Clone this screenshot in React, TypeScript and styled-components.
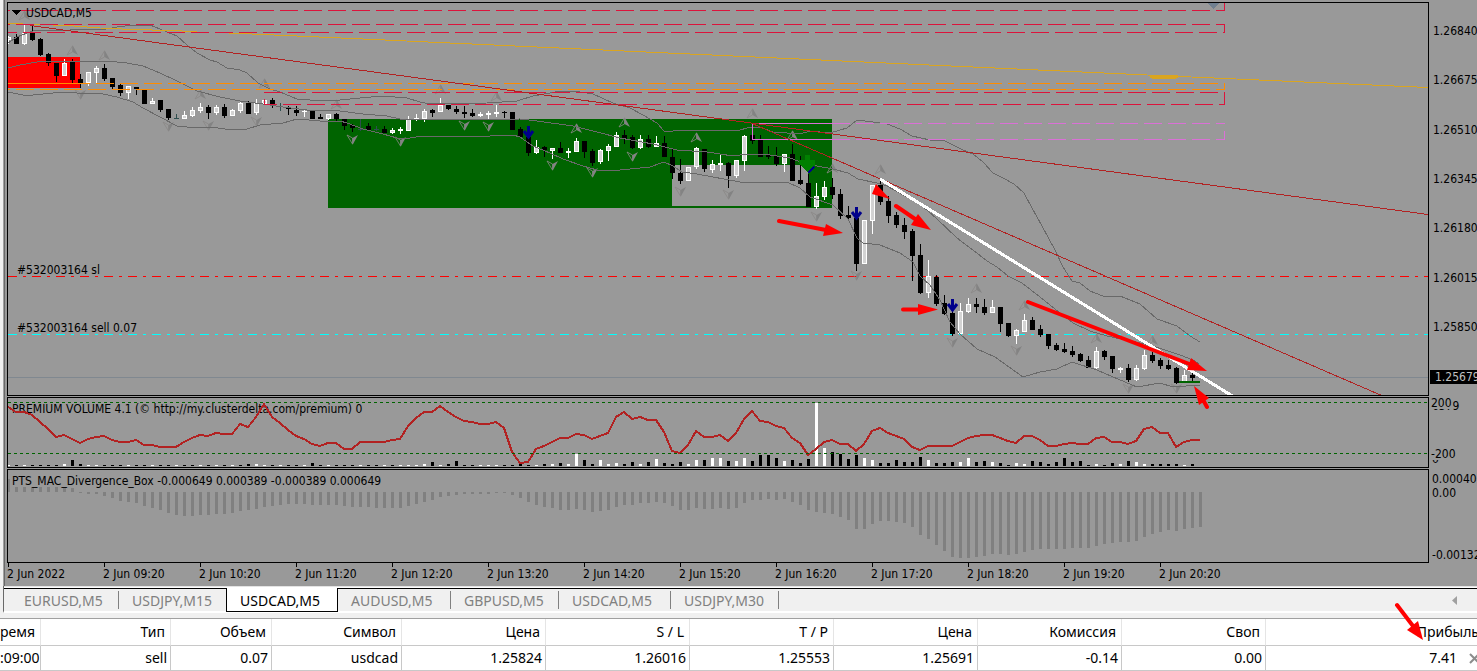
import React from 'react';
import styled, { createGlobalStyle, css } from 'styled-components';

const GlobalStyle = createGlobalStyle`
  html, body { margin: 0; padding: 0; background: #fff; }
  body { overflow: hidden; }
  * { box-sizing: border-box; }
`;

const chartFont = `"DejaVu Sans Condensed", "Noto Sans", sans-serif`;
const uiFont = `"Noto Sans", "Open Sans", sans-serif`;

const Terminal = styled.main`
  position: relative;
  overflow: hidden;
  background: #f0f0f0;
  font-family: ${uiFont};
`;

const ChartWindow = styled.section`
  display: flex;
  flex-direction: column;
  gap: 1px;
  margin-left: 3px;
  padding: 2px 0 0 3px;
  border-left: 1px solid #a0a0a0;
  box-shadow: inset 1px 0 0 #696969;
  background: #999;
  font: 12px/14px ${chartFont};
  color: #000;
`;

const Panel = styled.div<{ $height: number }>`
  display: grid;
  grid-template-columns: minmax(0, 1fr) 48px;
  height: ${(p) => p.$height}px;
`;

const Plot = styled.svg`
  display: block;
  width: 100%;
  height: 100%;
  border: 1px solid #000;
  shape-rendering: crispEdges;
`;

const Axis = styled.div`
  position: relative;
  overflow: hidden;
  white-space: nowrap;
`;

const PriceScale = styled.div`
  display: flex;
  flex-direction: column;
  justify-content: space-between;
  height: 310px;
  margin-top: 22px;
`;

const Tick = styled.div`
  display: flex;
  align-items: center;
  height: 14px;
  &::before {
    content: '';
    width: 2px;
    height: 1px;
    margin-right: 4px;
    background: #000;
  }
`;

const LastPrice = styled.div`
  height: 14px;
  margin: 36px 0 0 1px;
  padding-left: 5px;
  background: #000;
  color: #c0c0c0;
`;

const Level = styled.span<{ $top: number; $front?: boolean }>`
  position: absolute;
  left: 2px;
  top: ${(p) => p.$top}px;
  padding-left: 1px;
  ${(p) => p.$front && css`
    left: 1px;
    background: #999;
    height: 12px;
    line-height: 12px;
  `}
`;

const TimeAxis = styled.ol`
  display: flex;
  height: 23px;
  margin: -1px 0 0;
  padding: 0;
  list-style: none;
  overflow: hidden;
`;

const TimeMark = styled.li`
  flex: 0 0 96px;
  padding-top: 4px;
  white-space: nowrap;
  background: linear-gradient(#000, #000) 1px 0 / 1px 4px no-repeat;
`;

const TabBar = styled.nav`
  display: flex;
  align-items: stretch;
  height: 27px;
  margin-left: 3px;
  border-left: 1px solid #696969;
  border-bottom: 2px solid #fff;
  background: linear-gradient(#e3e3e3 0 1px, #fff 1px 2px, #000 2px 3px, #f0f0f0 3px);
`;

const Tab = styled.button<{ $active?: boolean; $width: number }>`
  flex: 0 0 ${(p) => p.$width}px;
  height: 24px;
  margin-top: 2px;
  padding: 2px 0 0 13px;
  border: 0;
  background: ${(p) => (p.$active ? '#fff' : 'linear-gradient(#808080, #808080) right 3px / 1px 18px no-repeat')};
  ${(p) => p.$active && css`
    border: 1px solid #000;
    border-top: 0;
    margin-left: -1px;
  `}
  color: ${(p) => (p.$active ? '#000' : '#808080')};
  font: 14px/20px ${uiFont};
  text-align: left;
  white-space: nowrap;
  &:first-child { padding-left: 20px; }
`;

const ScrollButton = styled.button`
  margin: 3px 18px 0 auto;
  padding: 0 2px;
  border: 0;
  background: none;
  line-height: 0;
`;

const TableFrame = styled.div`
  margin-top: 5px;
  border-top: 1px solid #a0a0a0;
  background: #fff;
  overflow: hidden;
`;

const Orders = styled.table`
  width: calc(100% + 8px);
  border-collapse: separate;
  border-spacing: 0;
  table-layout: fixed;
  font: 14px/20px ${uiFont};
  color: #000;
`;

const HeadCell = styled.th`
  height: 27px;
  padding: 0 5px 0 0;
  border-right: 1px solid #e5e5e5;
  border-bottom: 1px solid #c8c8c8;
  font-weight: 400;
  text-align: right;
  white-space: nowrap;
  &:last-child { border-right: 0; padding-right: 6px; }
`;

const Cell = styled.td`
  height: 25px;
  padding: 0 3px 0 0;
  border-right: 1px solid #c8c8c8;
  border-bottom: 1px solid #c8c8c8;
  text-align: right;
  white-space: nowrap;
`;

const ProfitCell = styled(Cell)`
  border-right: 0;
  padding-right: 5px;
`;

const CloseButton = styled.button`
  margin: 0 0 0 12px;
  padding: 0;
  border: 0;
  background: none;
  line-height: 0;
  vertical-align: -1px;
`;

const Markup = styled.svg`
  position: absolute;
  left: 0;
  top: 0;
  width: 100%;
  height: 100%;
  pointer-events: none;
`;

/* One bar is eight pixels wide; the first one is centred on x = 8. */
const barX = (i: number) => 8 + i * 8;

/* kind (1 rising, 0 falling, 2 unchanged), high, body top, body bottom, low */
const candles: number[][] = [
  [1, 36, 37, 40, 44], [0, 34, 37, 44, 44], [1, 24, 33, 44, 45], [0, 25, 33, 40, 41], [0, 38, 39, 55, 56],
  [0, 53, 54, 63, 66], [0, 63, 63, 76, 82], [1, 59, 63, 76, 76], [0, 59, 61, 80, 83], [0, 74, 79, 83, 88],
  [1, 72, 72, 83, 86], [1, 66, 68, 73, 83], [0, 64, 68, 79, 81], [0, 78, 78, 87, 89], [0, 83, 85, 93, 96],
  [1, 86, 86, 93, 99], [0, 87, 87, 89, 95], [0, 90, 90, 104, 104], [1, 98, 101, 104, 104], [0, 100, 100, 110, 112],
  [0, 109, 109, 118, 120], [2, 114, 118, 119, 119], [1, 111, 115, 119, 119], [1, 107, 110, 116, 117], [1, 103, 107, 111, 113],
  [0, 105, 107, 113, 119], [1, 105, 107, 113, 115], [0, 104, 107, 116, 118], [1, 109, 110, 116, 116], [1, 101, 103, 111, 113],
  [0, 101, 103, 114, 114], [1, 99, 103, 113, 115], [1, 99, 100, 104, 104], [0, 98, 100, 106, 108], [2, 103, 106, 107, 111],
  [0, 106, 107, 109, 115], [0, 106, 110, 113, 116], [1, 110, 111, 112, 117], [0, 111, 111, 119, 119], [0, 114, 117, 119, 119],
  [1, 114, 114, 119, 120], [0, 113, 114, 119, 121], [0, 119, 119, 126, 130], [0, 124, 125, 128, 132], [2, 119, 129, 130, 131],
  [0, 123, 126, 130, 130], [2, 126, 129, 130, 131], [0, 126, 129, 133, 133], [1, 128, 130, 133, 134], [1, 127, 129, 131, 134],
  [1, 116, 119, 131, 131], [1, 114, 118, 119, 121], [1, 109, 111, 119, 122], [0, 109, 110, 113, 117], [1, 98, 105, 112, 112],
  [0, 105, 105, 109, 110], [0, 106, 109, 112, 114], [0, 106, 112, 114, 118], [0, 109, 113, 116, 117], [1, 112, 114, 116, 117],
  [1, 111, 113, 115, 119], [1, 105, 112, 114, 117], [0, 111, 112, 113, 118], [0, 112, 112, 130, 130], [0, 127, 129, 137, 137],
  [0, 136, 137, 153, 156], [1, 140, 147, 153, 154], [0, 146, 147, 150, 157], [1, 148, 148, 151, 159], [0, 142, 148, 153, 153],
  [1, 148, 151, 153, 158], [1, 138, 141, 152, 152], [0, 141, 141, 152, 158], [0, 149, 151, 163, 166], [1, 149, 150, 162, 164],
  [1, 144, 146, 151, 161], [1, 132, 135, 147, 147], [0, 130, 135, 139, 144], [0, 135, 137, 148, 149], [1, 135, 139, 148, 149],
  [0, 135, 139, 147, 148], [1, 136, 143, 147, 147], [0, 136, 143, 157, 157], [0, 149, 157, 173, 179], [0, 159, 173, 181, 184],
  [1, 167, 167, 181, 181], [1, 147, 148, 167, 169], [0, 149, 149, 169, 172], [1, 160, 164, 170, 173], [1, 154, 163, 165, 171],
  [0, 162, 163, 176, 188], [1, 160, 160, 176, 178], [1, 135, 136, 161, 171], [0, 133, 135, 141, 144], [0, 135, 140, 157, 157],
  [0, 146, 155, 157, 159], [0, 147, 156, 164, 166], [1, 154, 154, 164, 172], [0, 144, 154, 181, 181], [0, 156, 180, 184, 185],
  [0, 174, 183, 207, 207], [1, 183, 196, 207, 209], [1, 181, 187, 197, 200], [0, 178, 187, 195, 199], [0, 189, 194, 216, 219],
  [0, 206, 215, 218, 219], [0, 216, 218, 264, 271], [1, 220, 220, 264, 264], [1, 185, 185, 221, 234], [0, 181, 185, 202, 205],
  [0, 196, 201, 216, 223], [0, 212, 215, 225, 228], [0, 218, 225, 232, 239], [0, 229, 231, 256, 281], [0, 244, 255, 293, 294],
  [1, 260, 276, 293, 298], [0, 275, 277, 304, 306], [0, 295, 303, 314, 315], [0, 312, 313, 334, 336], [1, 303, 311, 334, 334],
  [1, 298, 304, 312, 313], [0, 298, 304, 307, 313], [0, 299, 307, 313, 315], [1, 300, 307, 313, 313], [0, 307, 307, 324, 332],
  [0, 323, 323, 336, 337], [1, 329, 330, 336, 344], [1, 314, 320, 332, 332], [0, 317, 320, 330, 330], [0, 325, 329, 335, 337],
  [0, 334, 334, 346, 349], [0, 343, 345, 350, 351], [0, 343, 349, 352, 353], [0, 346, 351, 355, 357], [0, 353, 354, 361, 362],
  [0, 356, 360, 368, 368], [1, 347, 351, 368, 370], [0, 350, 351, 357, 360], [0, 356, 356, 369, 373], [1, 367, 368, 370, 373],
  [0, 364, 368, 380, 382], [1, 365, 368, 380, 381], [1, 350, 355, 369, 370], [0, 352, 355, 361, 363], [0, 358, 360, 366, 369],
  [0, 360, 365, 369, 370], [0, 367, 368, 383, 384], [1, 370, 375, 383, 383], [0, 372, 375, 378, 382],
];

const upperBand = '8,43 17,37 27,33 33,31 107,29 117,27 133,25 150,25 160,29 167,32 177,36 187,45 197,53 210,60 217,62 227,68 240,70 247,73 258,83 270,89 280,92 297,99 310,100 340,100 360,98 383,96 407,98 420,102 430,104 487,103 517,101 533,96 550,93 560,91 580,92 593,94 613,103 630,108 643,115 657,123 664,131 673,131 680,130 723,130 737,131 750,127 760,127 773,132 800,134 810,131 830,133 847,128 857,120 873,122 887,124 900,129 912,136 930,140 945,141 963,150 973,154 983,162 993,173 1003,178 1014,184 1024,193 1032,208 1042,226 1055,250 1063,267 1072,281 1080,283 1090,291 1103,296 1120,296 1140,304 1157,319 1177,326 1190,336 1200,342';
const middleBand = '8,68 20,65 37,62 67,61 107,61 127,63 143,66 160,73 177,81 197,91 220,97 240,101 263,104 283,107 307,110 340,111 363,114 387,116 400,119 420,119 470,120 520,119 537,121 573,126 597,132 620,138 653,144 677,150 707,152 733,156 747,154 770,155 790,158 803,163 817,166 833,169 848,173 858,179 877,183 887,186 907,197 920,204 937,219 957,238 973,250 987,261 997,267 1008,276 1022,283 1040,297 1060,313 1073,323 1090,331 1107,336 1150,345 1180,355 1193,360 1199,364';
const lowerBand = '8,92 23,95 33,95 63,92 77,93 103,94 117,97 133,102 143,108 160,117 177,126 187,127 210,127 233,130 247,129 260,125 283,123 297,119 320,121 340,121 347,123 363,129 383,134 397,138 410,138 423,136 490,136 513,135 520,137 533,146 550,153 563,159 583,166 597,170 620,170 650,167 664,162 673,166 682,172 697,174 740,182 787,182 800,188 810,197 833,205 848,219 857,238 863,243 880,245 900,253 913,262 920,276 930,285 940,300 950,322 960,334 977,349 995,357 1023,377 1040,372 1057,369 1072,362 1097,370 1113,377 1137,387 1160,383 1173,387 1200,385';

const fractalsUp = [[24, 10], [72, 45], [104, 50], [200, 89], [264, 78], [336, 99], [440, 84], [496, 91], [576, 123], [624, 117], [696, 132], [752, 108], [792, 130], [832, 163], [880, 164], [976, 283], [1024, 300], [1096, 333], [1152, 335]];
const fractalsDown = [[80, 100], [168, 132], [208, 131], [256, 127], [352, 145], [400, 147], [464, 131], [488, 132], [552, 171], [592, 178], [632, 162], [680, 197], [728, 200], [816, 222], [856, 281], [952, 348], [1016, 356], [1128, 394], [1176, 394]];
const sellSignals = [[528, 126], [856, 207], [952, 299]];

const oscillator = [
  407, 412, 412, 415, 422, 429, 437, 435, 439, 443, 439, 437, 436, 440, 442, 442, 440, 445, 445, 447,
  447, 447, 442, 438, 435, 436, 433, 434, 434, 424, 427, 417, 404, 417, 423, 430, 436, 439, 444, 446,
  443, 443, 449, 449, 442, 442, 442, 442, 440, 439, 426, 418, 412, 412, 406, 412, 417, 421, 422, 424,
  424, 422, 428, 452, 463, 462, 449, 446, 442, 438, 438, 434, 435, 439, 436, 433, 417, 412, 419, 417,
  420, 420, 432, 451, 453, 445, 431, 437, 437, 435, 441, 433, 419, 411, 421, 422, 426, 428, 438, 443,
  455, 449, 442, 440, 444, 444, 451, 444, 431, 428, 433, 436, 439, 447, 450, 446, 446, 446, 446, 442,
  438, 436, 435, 435, 438, 441, 443, 436, 436, 440, 446, 446, 444, 443, 444, 444, 438, 437, 442, 442,
  444, 441, 429, 427, 433, 433, 447, 442, 440, 440,
];

/* Positive values are drawn white, negative ones black. */
const volumes = [
  1, -1, 1, -1, -1, -1, -1, 2, -6, -2, 1, 1, -1, -1, -1, 1, -1, -1, 1, -1,
  -1, 1, -1, -1, 1, -1, 1, -1, 1, -1, -2, 2, 1, -1, 1, -1, -1, 1, -3, -1,
  1, -1, -1, -1, 1, -1, -1, 1, -1, 1, 1, 1, 2, -4, 1, -2, -5, -1, -1, 1,
  1, 1, -1, -1, -2, -1, 1, -2, 2, -3, 2, 12, -6, -2, 6, 2, 3, -2, -4, 2,
  -4, 7, -3, -2, -4, 2, 6, -6, 8, 8, -5, 5, 8, -5, -11, -11, -8, 5, -6, -3,
  -7, 63, 18, -14, -12, -7, -11, 8, 6, -3, -3, -6, -4, -4, -9, 6, -3, -3, -4, 4,
  8, -4, -5, 4, -3, -1, 3, 2, -5, -4, -2, -4, -8, -4, -5, -1, 2, -1, -3, 2,
  -5, 4, 2, -2, -2, -2, -2, 1, -2,
];

/* Length below the zero line; negative values rise above it. */
const histogram = [
  -13, -5, -5, -5, -5, -5, -5, -5, -4, 1, 2, 2, 4, 6, 9, 10, 11, 14, 16, 18,
  21, 23, 24, 24, 23, 23, 22, 22, 21, 19, 18, 17, 15, 14, 13, 12, 12, 12, 13, 13,
  13, 13, 14, 15, 15, 15, 16, 16, 16, 16, 14, 12, 10, 8, 5, 4, 3, 2, 2, 2,
  2, 1, 1, 3, 6, 10, 13, 15, 16, 18, 18, 17, 18, 20, 19, 18, 15, 13, 13, 11,
  11, 10, 11, 14, 18, 18, 16, 17, 17, 16, 17, 16, 11, 8, 8, 7, 8, 7, 10, 13,
  18, 20, 21, 22, 25, 28, 37, 37, 32, 29, 29, 30, 31, 35, 43, 47, 53, 59, 65, 66,
  66, 65, 64, 62, 62, 63, 62, 60, 58, 57, 57, 57, 57, 56, 56, 56, 54, 52, 51, 50,
  50, 49, 45, 42, 40, 38, 39, 37, 36, 35,
];

const Candle = ({ x, data }: { x: number; data: number[] }) => {
  const [kind, high, top, bottom, low] = data;
  const color = kind === 1 ? '#fff' : kind === 0 ? '#000' : '#2f4f4f';
  return (
    <g fill={color}>
      <rect x={x} y={high} width={1} height={low - high} />
      <rect x={x - 2} y={top} width={5} height={bottom - top} />
      {kind === 1 && bottom - top > 2 && <rect x={x - 1} y={top + 1} width={3} height={bottom - top - 2} fill="#d3d3d3" />}
    </g>
  );
};

const Fractal = ({ x, y, down }: { x: number; y: number; down?: boolean }) => (
  <g transform={`translate(${x} ${y}) scale(1 ${down ? -1 : 1})`} shapeRendering="auto">
    <path d="M0.500 1 L-5 10 L0.500 7 Z" fill="none" stroke="#8a8886" strokeWidth={0.8} />
    <path d="M0.500 0 L6 10 L0.500 7 Z" fill="#838383" />
  </g>
);

const SellSignal = ({ x, y }: { x: number; y: number }) => (
  <g transform={`translate(${x} ${y})`} fill="none" stroke="#00008b" strokeWidth={3} shapeRendering="auto">
    <path d="M0.500 0V10" />
    <path d="M-4 5L0.500 11L5 5" />
  </g>
);

const Dashed = ({ x, y, start, color }: { x: number; y: number; start: number; color: string }) => (
  <line x1={x} x2={1225} y1={y + 0.5} y2={y + 0.5} stroke={color} strokeDasharray="18 6" strokeDashoffset={(x - start + 2400) % 24} />
);

const PriceChart = () => (
  <Plot role="img" aria-label="USDCAD M5">
    <g transform="translate(-8 -3)">
      <rect x={8} y={57} width={72} height={31} fill="#f00" />
      <path d="M328 119H832V208H328Z M672 165V206H808V165Z" fill="#006400" fillRule="evenodd" />
      <line x1={8} x2="110%" y1={377.5} y2={377.5} stroke="#808890" />
      <line x1={8} x2="110%" y1={276.5} y2={276.5} stroke="#f00" strokeDasharray="9 6 3 6" />
      <line x1={8} x2="110%" y1={334.5} y2={334.5} stroke="#0ff" strokeDasharray="9 6 3 6" />
      {fractalsUp.map(([x, y]) => <Fractal key={x} x={x} y={y} />)}
      {fractalsDown.map(([x, y]) => <Fractal key={x} x={x} y={y} down />)}
      {candles.map((c, i) => <Candle key={i} x={barX(i)} data={c} />)}
      <g fill="none" stroke="#696969">
        <polyline points={upperBand} />
        <polyline points={middleBand} />
        <polyline points={lowerBand} />
      </g>
      <g fill="none" stroke="#daa520">
        <polyline points="8,23.500 67,25.500 107,28.500 197,31.500" />
        <polyline points="218,32.500 330,37.500 1180,76.500 1428,87.500" />
        <path d="M1152 76.500H1176" strokeWidth={4} strokeLinecap="round" />
      </g>
      <Dashed x={8} y={10} start={16} color="#dc143c" />
      <Dashed x={8} y={24} start={16} color="#dc143c" />
      <Dashed x={8} y={32} start={23} color="#dc143c" />
      <Dashed x={8} y={83} start={0} color="#ff8c00" />
      <Dashed x={8} y={89} start={16} color="#ff8c00" />
      <path d="M8 83.500H80" stroke="#ff8c00" />
      <Dashed x={264} y={92} start={0} color="#dc143c" />
      <Dashed x={264} y={104} start={19} color="#dc143c" />
      <Dashed x={832} y={123} start={16} color="#da70d6" />
      <Dashed x={832} y={139} start={16} color="#da70d6" />
      <path d="M832 123.500H752.500V139.500H832 M1224.500 131V139" fill="none" stroke="#da70d6" />
      <path d="M1224.500 3V11 M1224.500 24V33 M1224.500 92V105 M264.500 99V105" stroke="#dc143c" />
      <path d="M1224.500 83V90" stroke="#ff8c00" />
      <path d="M30 25.500L1428 214.500 M752 123.500L1384 396.500" stroke="#b22222" />
      <line x1={880} y1={179} x2={1234} y2={397} stroke="#fff" strokeWidth={3} />
      <path d="M805 155H810V160H815V165L808 172L799 164V160H805Z" fill="#008000" />
      <path d="M808 173L814 167" stroke="#00008b" strokeWidth={2} />
      {sellSignals.map(([x, y]) => <SellSignal key={x} x={x} y={y} />)}
      <rect x={1179} y={381} width={21} height={2} fill="#006400" />
      <path d="M1207 3H1219L1213 9Z" fill="#708090" />
      <path d="M11 10H21L16 15Z" fill="#000" />
      <text x={26} y={17}>USDCAD,M5</text>
      <text x={17} y={274}>#532003164 sl</text>
      <text x={17} y={332}>#532003164 sell 0.07</text>
    </g>
  </Plot>
);

const VolumeChart = () => (
  <Plot role="img" aria-label="Premium volume">
    <g transform="translate(-8 -398)">
      <line x1={8} x2="110%" y1={402.5} y2={402.5} stroke="#006400" strokeDasharray="3 3" />
      {volumes.map((v, i) => (
        <rect key={i} x={barX(i) - 1} y={466 - Math.abs(v)} width={3} height={Math.abs(v)} fill={v > 0 ? '#fff' : '#000'} />
      ))}
      <text x={12} y={413}>PREMIUM VOLUME 4.1 (© http://my.clusterdelta.com/premium) 0</text>
      <polyline points={oscillator.map((y, i) => `${barX(i)},${y}`).join(' ')} fill="none" stroke="#b22222" strokeWidth={2} />
      <line x1={8} x2="110%" y1={453.5} y2={453.5} stroke="#006400" strokeDasharray="3 3" />
    </g>
  </Plot>
);

const DivergenceChart = () => (
  <Plot role="img" aria-label="MAC divergence">
    <g transform="translate(-8 -470)">
      {histogram.map((v, i) => (
        <rect key={i} x={barX(i) - 1} y={v < 0 ? 492 + v : 492} width={3} height={Math.abs(v)} fill="#808080" />
      ))}
      <text x={12} y={485}>PTS_MAC_Divergence_Box -0.000649 0.000389 -0.000389 0.000649</text>
    </g>
  </Plot>
);

const prices = ['1.26840', '1.26675', '1.26510', '1.26345', '1.26180', '1.26015', '1.25850'];
const times = ['2022', '09:20', '10:20', '11:20', '12:20', '13:20', '14:20', '15:20', '16:20', '17:20', '18:20', '19:20', '20:20'];
const tabs: [string, number][] = [
  ['EURUSD,M5', 115], ['USDJPY,M15', 108], ['USDCAD,M5', 112], ['AUDUSD,M5', 113], ['GBPUSD,M5', 108], ['USDCAD,M5', 112], ['USDJPY,M30', 108],
];
const activeTab = 2;
const columns: [string, string, number][] = [
  ['ремя', ':09:00', 41], ['Тип', 'sell', 130], ['Объем', '0.07', 101], ['Символ', 'usdcad', 130],
  ['Цена', '1.25824', 144], ['S / L', '1.26016', 144], ['T / P', '1.25553', 144], ['Цена', '1.25691', 144],
  ['Комиссия', '-0.14', 144], ['Своп', '0.00', 144],
];

const App = () => (
  <Terminal>
    <GlobalStyle />
    <ChartWindow>
      <Panel $height={394}>
        <PriceChart />
        <Axis>
          <PriceScale>{prices.map((p) => <Tick key={p}>{p}</Tick>)}</PriceScale>
          <LastPrice>1.25679</LastPrice>
        </Axis>
      </Panel>
      <Panel $height={71}>
        <VolumeChart />
        <Axis>
          <Level $top={2}>6379</Level>
          <Level $top={0} $front>200</Level>
          <Level $top={55}>0</Level>
          <Level $top={51} $front>-200</Level>
        </Axis>
      </Panel>
      <Panel $height={94}>
        <DivergenceChart />
        <Axis>
          <Level $top={3}>0.00040</Level>
          <Level $top={17}>0.00</Level>
          <Level $top={79}>-0.00132</Level>
        </Axis>
      </Panel>
      <TimeAxis>{times.map((t) => <TimeMark key={t}>2 Jun {t}</TimeMark>)}</TimeAxis>
    </ChartWindow>
    <TabBar>
      {tabs.map(([name, width], i) => (
        <Tab key={i} type="button" $width={width} $active={i === activeTab}>{name}</Tab>
      ))}
      <ScrollButton type="button" aria-label="Scroll tabs left">
        <svg width="5" height="9" viewBox="0 0 5 9"><path d="M5 0V9L0 4.500Z" fill="#a0a0a0" /></svg>
      </ScrollButton>
    </TabBar>
    <TableFrame>
      <Orders>
        <colgroup>
          {columns.map((c, i) => <col key={i} style={{ width: c[2] }} />)}
          <col />
        </colgroup>
        <thead>
          <tr>
            {columns.map((c, i) => <HeadCell key={i}>{c[0]}</HeadCell>)}
            <HeadCell>Прибыль</HeadCell>
          </tr>
        </thead>
        <tbody>
          <tr>
            {columns.map((c, i) => <Cell key={i}>{c[1]}</Cell>)}
            <ProfitCell>
              7.41
              <CloseButton type="button" aria-label="Close order">
                <svg width="11" height="11" viewBox="0 0 11 11"><path d="M1 1L10 10M10 1L1 10" stroke="#8c8c8c" strokeWidth="2" /></svg>
              </CloseButton>
            </ProfitCell>
          </tr>
        </tbody>
      </Orders>
    </TableFrame>
    <Markup aria-hidden="true">
      <g stroke="#f00" strokeWidth={4} strokeLinecap="round">
        <path d="M779 221L826 230M896 206L918 221M903 309.500H920M1028 302L1192 365M1207 407L1202 398M1397 605L1413 626" />
      </g>
      <g fill="#f00">
        <path d="M826 224L843 233L823 236Z" />
        <path d="M876 184L872 194L890 199Z" />
        <path d="M918 214L931 230L911 225Z" />
        <path d="M918 304L938 309.500L918 315Z" />
        <path d="M1191 358L1207 371L1187 370Z" />
        <path d="M1194 386L1209 398L1199 405Z" />
        <path d="M1423 640L1418 621L1407 630Z" />
      </g>
    </Markup>
  </Terminal>
);

export default App;
